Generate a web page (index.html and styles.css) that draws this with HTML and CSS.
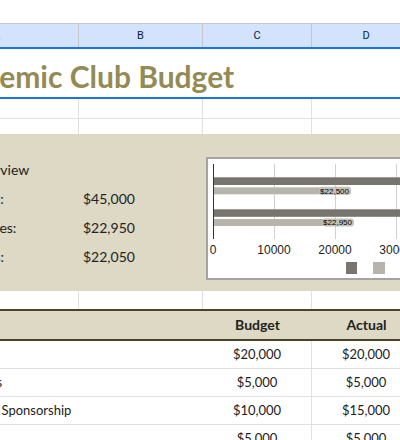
FILE: index.html
```html
<!DOCTYPE html>
<html lang="en">

<head>
    <meta charset="UTF-8">
    <meta name="viewport" content="width=device-width, initial-scale=1.0">
    <title>Academic Club Budget</title>
    <link rel="stylesheet" href="styles.css">
</head>

<body>
    <div class="sheet">
        <div class="topbar"></div>

        <div class="col-heads">
            <div class="col-head">A</div>
            <div class="col-head">B</div>
            <div class="col-head">C</div>
            <div class="col-head">D</div>
        </div>

        <div class="title-row">
            <h1 class="title">Academic Club Budget</h1>
        </div>

        <div class="row row-blank">
            <div class="cell"></div>
            <div class="cell"></div>
            <div class="cell"></div>
            <div class="cell"></div>
        </div>
        <div class="row row-short">
            <div class="cell"></div>
            <div class="cell"></div>
            <div class="cell"></div>
            <div class="cell"></div>
        </div>

        <div class="overview">
            <div class="summary">
                <div class="summary-row"><span>Budget Overview</span><span></span></div>
                <div class="summary-row"><span>Total Income:</span><span>$45,000</span></div>
                <div class="summary-row"><span>Total Expenses:</span><span>$22,950</span></div>
                <div class="summary-row"><span>Total Surplus:</span><span>$22,050</span></div>
            </div>

            <div class="chart">
                <svg width="211" height="119" viewBox="0 0 211 119">
                    <g stroke="#d0d0d0" stroke-width="1">
                        <line x1="66.5" y1="5" x2="66.5" y2="80" />
                        <line x1="127.5" y1="5" x2="127.5" y2="80" />
                        <line x1="188.5" y1="5" x2="188.5" y2="80" />
                    </g>
                    <rect x="5" y="18.3" width="280" height="7.7" fill="#77756e" />
                    <rect x="5" y="28.3" width="137.5" height="7" fill="#b7b4ac" />
                    <rect x="111" y="27.8" width="32" height="8" rx="3.5" fill="#c4c1b9" />
                    <rect x="5" y="50.3" width="280" height="7.5" fill="#77756e" />
                    <rect x="5" y="60" width="140" height="7" fill="#b7b4ac" />
                    <rect x="114" y="59.5" width="32" height="8" rx="3.5" fill="#c4c1b9" />
                    <line x1="5.5" y1="5" x2="5.5" y2="80" stroke="#333" stroke-width="1" />
                    <g class="bar-label">
                        <text x="141" y="34.6" text-anchor="end">$22,500</text>
                        <text x="144" y="66.3" text-anchor="end">$22,950</text>
                    </g>
                    <g class="tick">
                        <text x="5" y="95" text-anchor="middle">0</text>
                        <text x="66" y="95" text-anchor="middle">10000</text>
                        <text x="127" y="95" text-anchor="middle">20000</text>
                        <text x="188" y="95" text-anchor="middle">30000</text>
                    </g>
                    <rect x="138" y="103" width="11" height="12" fill="#77756e" />
                    <rect x="165" y="103" width="12" height="12" fill="#b7b4ac" />
                </svg>
            </div>
        </div>

        <div class="row row-gap">
            <div class="cell"></div>
            <div class="cell"></div>
            <div class="cell"></div>
            <div class="cell"></div>
        </div>

        <div class="table-head">
            <div class="th th-left">Category</div>
            <div class="th">Budget</div>
            <div class="th">Actual</div>
        </div>

        <div class="table-row">
            <div class="td td-left">Grants</div>
            <div class="td">$20,000</div>
            <div class="td">$20,000</div>
        </div>
        <div class="table-row">
            <div class="td td-left">Memberships</div>
            <div class="td">$5,000</div>
            <div class="td">$5,000</div>
        </div>
        <div class="table-row">
            <div class="td td-left">Local Vendor Sponsorship</div>
            <div class="td">$10,000</div>
            <div class="td">$15,000</div>
        </div>
        <div class="table-row">
            <div class="td td-left">Fundraising</div>
            <div class="td">$5,000</div>
            <div class="td">$5,000</div>
        </div>
    </div>
</body>

</html>
```

FILE: styles.css
```css
* {
    box-sizing: border-box;
}

body {
    margin: 0;
    padding: 0;
    width: 400px;
    height: 440px;
    overflow: hidden;
    background-color: #fff;
    font-family: 'Lato', sans-serif;
    color: #222;
}

.sheet {
    margin-left: -85px;
    width: 506px;
}

.topbar {
    height: 23px;
}

.col-heads,
.row {
    display: grid;
    grid-template-columns: 164px 124px 109px 109px;
}

.col-heads {
    height: 26px;
    border-top: 1px solid #c4c7c5;
    border-bottom: 2px solid #1a73e8;
    background-color: #d3e3fd;
}

.col-head {
    border-right: 1px solid #c4c7c5;
    font-family: 'Roboto', sans-serif;
    font-size: 11px;
    color: #041e49;
    text-align: center;
    line-height: 23px;
}

.title-row {
    height: 50px;
    border-bottom: 2px solid #1a73e8;
    display: flex;
    align-items: center;
}

.title {
    margin: 0;
    padding: 6px 0 0 17px;
    font-size: 30px;
    font-weight: 700;
    color: #948a54;
    white-space: nowrap;
}

.cell {
    border-right: 1px solid #e1e1e1;
}

.row-blank {
    height: 20px;
    border-bottom: 1px solid #e1e1e1;
}

.row-short {
    height: 15px;
}

.row-gap {
    height: 18px;
}

.overview {
    height: 157px;
    background-color: #ddd9c4;
    display: flex;
    align-items: flex-start;
}

.summary {
    padding-top: 21px;
    width: 288px;
}

.summary-row {
    display: grid;
    grid-template-columns: 164px 124px;
    height: 29px;
    line-height: 29px;
    font-size: 14px;
    white-space: nowrap;
}

.summary-row span {
    padding: 0 4px 0 7px;
}

.summary-row span + span {
    padding-left: 4px;
}

.chart {
    margin: 23px 0 0 3px;
    width: 215px;
    height: 123px;
    border: 2px solid #a3a3a3;
    background-color: #fff;
}

.chart svg {
    display: block;
}

.bar-label text {
    font-family: 'Liberation Sans', Arial, sans-serif;
    font-size: 8px;
    fill: #000;
}

.tick text {
    font-family: 'Liberation Sans', Arial, sans-serif;
    font-size: 12px;
    fill: #222;
}

.table-head,
.table-row {
    display: grid;
    grid-template-columns: 288px 109px 109px;
}

.table-head {
    height: 32px;
    border-top: 2px solid #494429;
    border-bottom: 2px solid #494429;
    background-color: #ddd9c4;
}

.th {
    font-size: 14px;
    font-weight: 700;
    text-align: center;
    line-height: 28px;
}

.table-row {
    height: 28px;
    border-bottom: 1px solid #e1e1e1;
}

.td {
    font-size: 13px;
    text-align: center;
    line-height: 27px;
    border-right: 1px solid #e1e1e1;
    white-space: nowrap;
}

.th.th-left,
.td.td-left {
    text-align: left;
    padding-left: 10px;
    border-right: none;
}
```
